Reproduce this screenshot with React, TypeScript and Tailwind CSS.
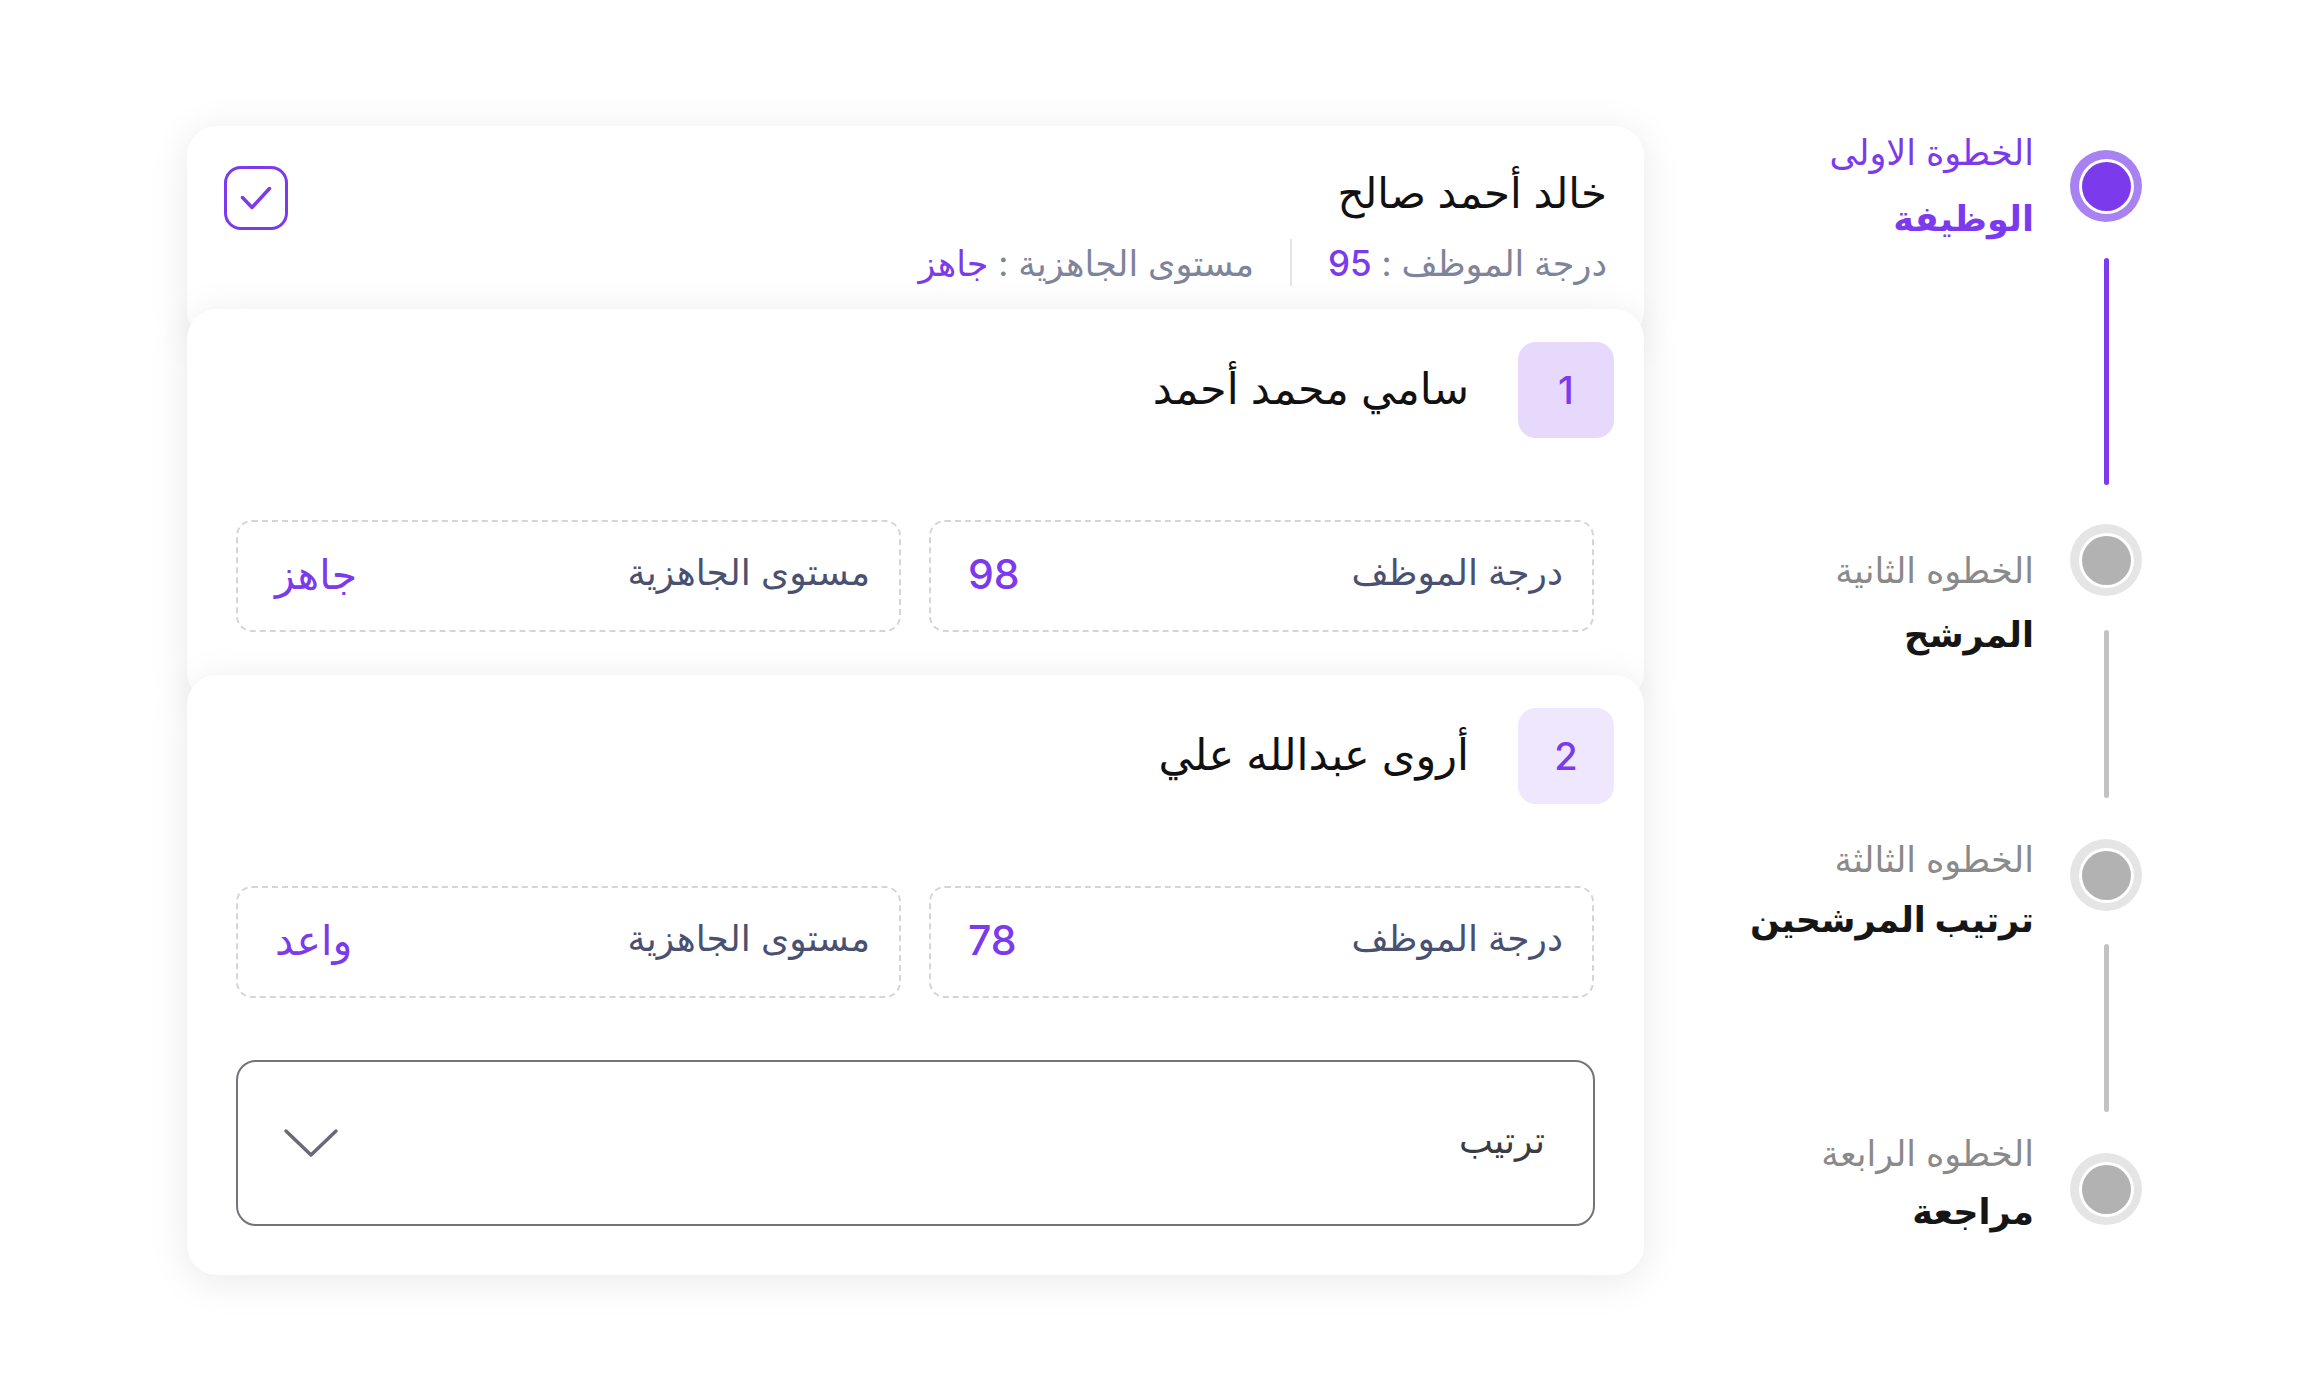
import React from "react";

function Check() {
  return (
    <div className="w-[64px] h-[64px] rounded-[17px] border-[3.5px] border-[#7c3aed] flex items-center justify-center">
      <svg width="32" height="24" viewBox="0 0 32 24" fill="none">
        <polyline points="2.5,11.5 12,21.5 29.5,2.5" stroke="#7c3aed" strokeWidth="3.5" strokeLinecap="round" strokeLinejoin="round" />
      </svg>
    </div>
  );
}

function Field({ label, value }: { label: string; value: string }) {
  return (
    <div className="h-[112px] rounded-[16px] border-2 border-dashed border-[#d3d4dd] flex items-center justify-between pr-[29px] pl-[37px] pb-[8px]">
      <span className="text-[36px] leading-[40px] text-[#4a5170]">{label}</span>
      <span className="text-[41px] leading-[44px] font-medium text-[#7c3aed] mt-[3px]">{value}</span>
    </div>
  );
}

function Candidate({
  num,
  name,
  score,
  ready,
  badge,
}: {
  num: string;
  name: string;
  score: string;
  ready: string;
  badge: string;
}) {
  return (
    <>
      <div className="flex items-center gap-[49px] pr-[30px]">
        <div className={`w-[96px] h-[96px] rounded-[18px] flex items-center justify-center ${badge}`}>
          <span className="text-[38px] leading-none font-medium text-[#7c3aed]">{num}</span>
        </div>
        <span className="text-[43px] leading-[48px] text-[#111111] -mt-[4px]">{name}</span>
      </div>
      <div className="grid grid-cols-2 gap-[28px] mt-[82px] pr-[50px] pl-[49px]">
        <Field label="درجة الموظف" value={score} />
        <Field label="مستوى الجاهزية" value={ready} />
      </div>
    </>
  );
}

function Circle({ active }: { active?: boolean }) {
  return (
    <div
      className={`w-[72px] h-[72px] rounded-full flex items-center justify-center ${
        active ? "bg-[#a882f2]" : "bg-[#e5e5e5]"
      }`}
    >
      <div className="w-[55px] h-[55px] rounded-full bg-white flex items-center justify-center">
        <div className={`w-[49px] h-[49px] rounded-full ${active ? "bg-[#7c3aed]" : "bg-[#b2b2b2]"}`} />
      </div>
    </div>
  );
}

function StepText({
  label,
  title,
  active,
  gap,
  top,
}: {
  label: string;
  title: string;
  active?: boolean;
  gap: string;
  top: string;
}) {
  return (
    <div className={`flex flex-col items-start ${top}`}>
      <span className={`text-[35px] leading-[30px] ${active ? "text-[#7c3aed]" : "text-[#8a8a8a]"}`}>{label}</span>
      <span
        className={`text-[35px] leading-[40px] font-semibold ${gap} ${active ? "text-[#7c3aed]" : "text-[#161616]"}`}
      >
        {title}
      </span>
    </div>
  );
}

export default function App() {
  return (
    <div className="w-[2301px] h-[1386px] bg-white overflow-hidden flex font-['Inter','DejaVu_Sans',sans-serif]">
      {/* Cards column */}
      <div dir="rtl" className="w-[1457px] ml-[187px] mt-[126px] flex flex-col">
        <div className="relative z-10 h-[215px] rounded-[30px] bg-white shadow-[0_6px_40px_rgba(0,0,0,0.09)] px-[37px] pt-[40px] flex justify-between items-start">
          <div className="flex flex-col items-start mt-[5px]">
            <span className="text-[42px] leading-[44px] text-[#111111]">خالد أحمد صالح</span>
            <div className="flex items-center gap-[36px] mt-[24px] text-[35px] leading-[36px] text-[#7d849b]">
              <span>
                درجة الموظف : <span className="text-[#7c3aed] font-medium">95</span>
              </span>
              <div className="w-[2px] h-[47px] bg-[#e4e4e7]" />
              <span>
                مستوى الجاهزية : <span className="text-[#7c3aed] font-medium">جاهز</span>
              </span>
            </div>
          </div>
          <Check />
        </div>

        <div className="relative z-20 -mt-[32px] rounded-[30px] bg-white shadow-[0_6px_40px_rgba(0,0,0,0.09)] pt-[33px] pb-[70px]">
          <Candidate num="1" name="سامي محمد أحمد" score="98" ready="جاهز" badge="bg-[#e6d9fb]" />
        </div>

        <div className="relative z-30 -mt-[27px] rounded-[30px] bg-white shadow-[0_6px_40px_rgba(0,0,0,0.09)] pt-[33px] pb-[49px]">
          <Candidate num="2" name="أروى عبدالله علي" score="78" ready="واعد" badge="bg-[#efe7fd]" />
          <div className="mt-[62px] mx-[49px] h-[166px] rounded-[20px] border-2 border-[#76737e] flex items-center justify-between pr-[48px] pl-[45px]">
            <span className="text-[36px] leading-[40px] text-[#3b3b42] -mt-[6px]">ترتيب</span>
            <svg width="56" height="30" viewBox="0 0 56 30" fill="none">
              <polyline points="3,3 28,27 53,3" stroke="#6b6973" strokeWidth="3.5" strokeLinecap="round" strokeLinejoin="round" />
            </svg>
          </div>
        </div>
      </div>

      <div className="flex-1" />

      {/* Stepper */}
      <div className="mr-[159px] flex gap-[36px]">
        <div dir="rtl" className="flex flex-col items-start">
          <StepText top="mt-[137px]" gap="mt-[31px]" active label="الخطوة الاولى" title="الوظيفة" />
          <StepText top="mt-[317px]" gap="mt-[29px]" label="الخطوه الثانية" title="المرشح" />
          <StepText top="mt-[190px]" gap="mt-[25px]" label="الخطوه الثالثة" title="ترتيب المرشحين" />
          <StepText top="mt-[199px]" gap="mt-[23px]" label="الخطوه الرابعة" title="مراجعة" />
        </div>
        <div className="w-[72px] flex flex-col items-center">
          <div className="mt-[150px]">
            <Circle active />
          </div>
          <div className="mt-[36px] w-[5px] h-[227px] rounded-full bg-[#7c3aed]" />
          <div className="mt-[39px]">
            <Circle />
          </div>
          <div className="mt-[34px] w-[5px] h-[168px] rounded-full bg-[#c2c2c2]" />
          <div className="mt-[41px]">
            <Circle />
          </div>
          <div className="mt-[33px] w-[5px] h-[168px] rounded-full bg-[#c2c2c2]" />
          <div className="mt-[41px]">
            <Circle />
          </div>
        </div>
      </div>
    </div>
  );
}
